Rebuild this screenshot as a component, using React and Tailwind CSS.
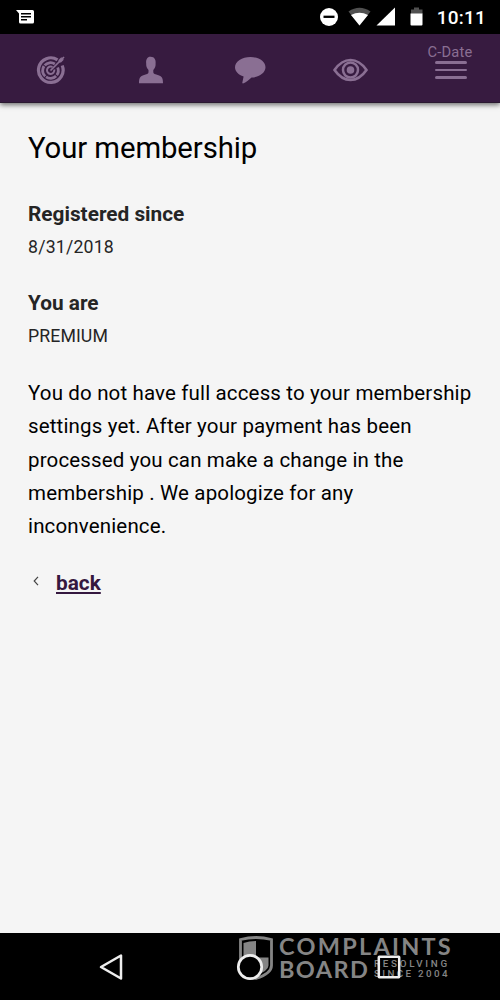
function StatusBar() {
  return (
    <div className="flex h-[34px] items-center justify-between bg-black pl-4 pr-[14px] text-white">
      <svg width="19" height="17" viewBox="0 0 19 17">
        <path d="M0 1h16.500q1.500 0 1.500 1.500v10.500q0 1.500-1.500 1.500h-12q-1.500 0-1.500-1.500v-8.500z" fill="#fff" />
        <path d="M5 4.800h10M5 7.800h10M5 10.800h6" stroke="#000" strokeWidth="1.500" />
      </svg>

      <div className="flex items-center">
        <svg width="104" height="20" viewBox="0 0 104 20">
          <circle cx="9" cy="10" r="9" fill="#fff" />
          <path d="M3.500 9.800h11" stroke="#000" strokeWidth="2.300" />
          <path d="M28.500 4.500q11-7.500 22 0L39.500 18.500z" fill="#505050" />
          <path d="M31 8q8.500-4.500 17 0L39.500 18.500z" fill="#fff" />
          <path d="M56.500 18.500L75 .5v18z" fill="#fff" />
          <path d="M91 7V2.500h3V.5h5v2h3.500V7z" fill="#505050" />
          <path d="M90.500 6.500h12v11q0 1-1 1h-10q-1 0-1-1z" fill="#fff" />
        </svg>
        <span className="ml-[13px] text-[19px] font-medium leading-none tracking-[0.2px]">10:11</span>
      </div>
    </div>
  );
}

function TopNav() {
  return (
    <header className="relative z-10 grid h-[69px] grid-cols-5 items-center border-b border-[#2a1830] bg-[#371b40] text-[#8a6f93] shadow-[0_2px_5px_rgba(0,0,0,0.55)]">
      <svg className="ml-9 mt-1" width="30" height="30" viewBox="0 0 30 30" fill="none" stroke="currentColor">
        <path d="M21.500 4.800A12.300 12.300 0 1 0 26.200 10.500" strokeWidth="3.200" />
        <path d="M18.800 9A7.800 7.800 0 1 0 21.700 12.500" strokeWidth="2.800" strokeDasharray="11 1" />
        <path d="M16.500 12A3.700 3.700 0 1 0 18.300 14.500" strokeWidth="2" />
        <path d="M14.500 15.500L28 2" strokeWidth="1.700" />
        <path d="M22.500 7.500v-2.500l3-3 .5 2 2 .5-3 3z" fill="currentColor" stroke="none" />
      </svg>

      <svg className="ml-[38px] mt-1" width="26" height="28" viewBox="0 0 26 28" fill="currentColor">
        <path d="M1 27.200c0-5.200 1-6.700 4.300-7.900 3.400-1.100 5.200-1.100 5.200-3V14C8.700 12.300 8 9.700 8.200 7.500 7.700 3 9.700.7 12 .7c3.800-.5 6.200 2.400 5.600 6.800.2 2.500-.5 4.800-2.300 6.500v2.300c0 1.900 1.800 1.900 5.200 3 3.500 1.200 4.500 2.700 4.500 7.900z" />
      </svg>

      <svg className="mx-auto mt-1" width="32" height="28" viewBox="0 0 32 28" fill="currentColor">
        <path d="M16.500 1C25 1 31.500 5.500 31.500 11.300S24.600 21.500 17.500 21.500C15 23.500 12 26.500 9 27.500c-.7 0-.8-.5-.6-1.200l1.200-5.800C4.500 19 1 15.500 1 11.300 1 5.500 7.900 1 16.500 1z" />
      </svg>

      <svg className="mx-auto mt-1" width="36" height="24" viewBox="0 0 36 24" fill="none" stroke="currentColor">
        <path d="M2.500 12Q9.500 2 18.500 2t16 10q-7 10-16 10t-16-10z" strokeWidth="2.700" strokeLinejoin="round" />
        <circle cx="18.500" cy="12" r="7.500" strokeWidth="2.500" />
        <circle cx="18.500" cy="12" r="3.800" fill="currentColor" stroke="none" />
      </svg>

      <div className="flex h-full flex-col items-center pt-[9px]">
        <span className="text-[14.700px] leading-[18px] tracking-[0.2px]">C-Date</span>
        <div className="ml-[2px] flex w-8 flex-col gap-[5px]">
          <div className="h-[2.500px] rounded-full bg-current"></div>
          <div className="h-[2.500px] rounded-full bg-current"></div>
          <div className="h-[2.500px] rounded-full bg-current"></div>
        </div>
      </div>
    </header>
  );
}

function Watermark() {
  return (
    <div className="absolute left-[238px] top-[2px] flex text-[#858585]">
      <svg width="36" height="46" viewBox="0 0 36 46">
        <path d="M2.500 4.500Q18 .5 33.500 4.500v26q0 8-15.500 13Q2.500 38.500 2.500 30.500z" fill="none" stroke="currentColor" strokeWidth="2.800" />
        <path d="M5.500 8Q11 6 18 6V22.500H5.500zM18 22.500h12.500v8q0 5-12.500 10z" fill="currentColor" />
      </svg>
      <div className="ml-[5px] font-[Lato] font-bold">
        <div className="h-[22.500px] whitespace-nowrap text-[23.500px] leading-[22.500px] tracking-[2.250px]">COMPLAINTS</div>
        <div className="flex">
          <div className="w-[95px] text-[23.500px] leading-[23px] tracking-[1.400px]">BOARD</div>
          <div className="whitespace-nowrap pt-[1px] font-[Roboto] text-[9.800px] font-medium leading-[10.500px]">
            <div className="tracking-[2.700px]">RESOLVING</div>
            <div className="tracking-[2.350px]">SINCE 2004</div>
          </div>
        </div>
      </div>
    </div>
  );
}

function BottomBar() {
  return (
    <footer className="relative h-[67px] bg-black">
      <Watermark />
      <div className="relative flex h-full items-center justify-center gap-[111px]">
        <svg width="28" height="28" viewBox="0 0 28 28" fill="none" stroke="#eee">
          <path d="M4 14L24 2.500v23z" strokeWidth="2.500" strokeLinejoin="round" />
        </svg>
        <svg width="28" height="28" viewBox="0 0 28 28" fill="#000" stroke="#eee">
          <circle cx="14" cy="14" r="11.700" strokeWidth="2.700" />
        </svg>
        <svg width="28" height="28" viewBox="0 0 28 28" fill="none" stroke="#eee">
          <rect x="3.800" y="3.800" width="20.400" height="20.400" rx="0.500" strokeWidth="2.500" />
        </svg>
      </div>
    </footer>
  );
}

function App() {
  return (
    <div className="flex h-[1000px] w-[500px] flex-col overflow-hidden bg-[#f5f5f5] font-[Roboto,sans-serif]">
      <StatusBar />
      <TopNav />

      <main className="flex-1 px-7 pt-[25px] text-black">
        <h1 className="text-[29.300px] leading-10 tracking-[-0.080px]">Your membership</h1>

        <dl className="mt-[30px] text-[#252525]">
          <dt className="text-[20.800px] font-bold leading-[33px]">Registered since</dt>
          <dd className="text-[17.700px] leading-[33px] tracking-[0.2px]">8/31/2018</dd>
          <dt className="mt-[23px] text-[20.800px] font-bold leading-[33px]">You are</dt>
          <dd className="text-[17.700px] leading-[33px] tracking-[0.1px]">PREMIUM</dd>
        </dl>

        <p className="mt-6 whitespace-nowrap text-[20.500px] leading-[33.300px] tracking-[0.150px]">
          You do not have full access to your membership
          <br />
          settings yet. After your payment has been
          <br />
          processed you can make a change in the
          <br />
          membership . We apologize for any
          <br />
          inconvenience.
        </p>

        <div className="mt-6 flex items-center">
          <svg className="ml-[5px] mr-[17px] -mt-1.5" width="6" height="10" viewBox="0 0 6 10">
            <path d="M5 .8L1.200 5 5 9.200" fill="none" stroke="#444" strokeWidth="1.200" />
          </svg>
          <a href="#" className="text-[20.800px] font-bold leading-[33px] text-[#35183f] underline">back</a>
        </div>
      </main>

      <BottomBar />
    </div>
  );
}

export default App;
